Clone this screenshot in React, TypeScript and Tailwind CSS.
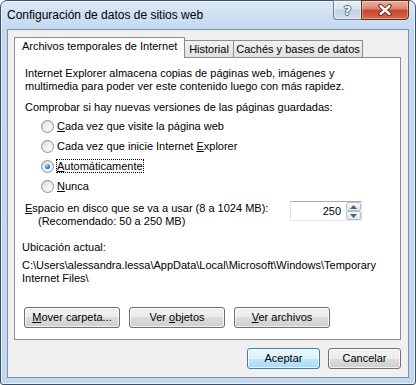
import type { ReactNode } from "react";

const BODY = "font-['Liberation_Sans',Arial,sans-serif] text-[11px] leading-[13px] text-black";

function Radio({ checked = false }: { checked?: boolean }) {
  return (
    <span className="relative flex h-[13px] w-[13px] shrink-0 items-center justify-center rounded-full border border-[#8e8f8f] bg-[linear-gradient(135deg,#cfd1d3,#fbfbfb)]">
      <span className="h-[9px] w-[9px] rounded-full bg-[linear-gradient(135deg,#e1e2e3,#ffffff)]" />
      {checked && (
        <span className="absolute h-[5px] w-[5px] rounded-full bg-[radial-gradient(circle_at_35%_30%,#9be4ff,#2b7ed6_55%,#0b3f80)]" />
      )}
    </span>
  );
}

function Button({
  children,
  width,
  primary = false,
}: {
  children: ReactNode;
  width: string;
  primary?: boolean;
}) {
  return (
    <div
      className={`flex h-[21px] items-center justify-center rounded-[3px] border shadow-[inset_0_0_0_1px_rgba(255,255,255,0.7)] ${width} ${
        primary
          ? "border-[#3c7fb1] bg-[linear-gradient(#ecf7fd_0%,#dcf1fc_50%,#c1e6fc_50%,#a9daf6_100%)]"
          : "border-[#707070] bg-[linear-gradient(#f2f2f2_0%,#ebebeb_50%,#dddddd_50%,#cfcfcf_100%)]"
      }`}
    >
      {children}
    </div>
  );
}

function SpinButton({ up = false }: { up?: boolean }) {
  return (
    <div className="flex h-[9px] w-[15px] items-center justify-center rounded-[2px] border border-[#b5c0cc] bg-[linear-gradient(#f7f8fa,#dfe5ec)]">
      <svg width="7" height="4" viewBox="0 0 7 4">
        <path d={up ? "M0 4 L3.5 0 L7 4 Z" : "M0 0 L3.5 4 L7 0 Z"} fill="#4b5f80" />
      </svg>
    </div>
  );
}

const RADIOS: { label: ReactNode; checked?: boolean }[] = [
  { label: <><span className="underline underline-offset-[1px]">C</span>ada vez que visite la página web</> },
  { label: <>Cada vez que inicie Internet <span className="underline underline-offset-[1px]">E</span>xplorer</> },
  {
    label: (
      <span className="outline-1 outline-dotted outline-black">
        <span className="underline underline-offset-[1px]">A</span>utomáticamente
      </span>
    ),
    checked: true,
  },
  { label: <><span className="underline underline-offset-[1px]">N</span>unca</> },
];

export default function App() {
  return (
    <div className="h-[385px] w-[416px] overflow-hidden bg-white">
      <div className="flex h-[385px] w-[416px] flex-col rounded-t-[7px] rounded-b-[3px] border border-[#3e5068] bg-[linear-gradient(180deg,#dbe8f6_0px,#c4d9f1_28px,#c2d8f1_100%)] px-[6px] pb-[6px] shadow-[inset_0_0_0_1px_#e6f0fb]">
        {/* Title bar */}
        <div className="flex h-[28px] items-start justify-between">
          <div className="pt-[7px] font-['Liberation_Sans',Arial,sans-serif] text-[12px] leading-[14px] text-black">
            Configuración de datos de sitios web
          </div>
          <div className="-mt-px flex">
            <div className="flex h-[20px] w-[28px] items-center justify-center rounded-bl-[4px] border border-r-0 border-[#6f7f93] bg-[linear-gradient(#e9f0f8_0%,#d6e2ef_45%,#bfd0e3_50%,#d2e0f0_100%)] shadow-[inset_0_0_0_1px_rgba(255,255,255,0.5)]">
              <span className="font-['DejaVu_Sans',sans-serif] text-[13px] font-bold leading-none text-white [text-shadow:1px_0_#56667a,-1px_0_#56667a,0_1px_#56667a,0_-1px_#56667a]">
                ?
              </span>
            </div>
            <div className="flex h-[20px] w-[48px] items-center justify-center rounded-br-[4px] border border-[#5a2a24] bg-[linear-gradient(#eab0a2_0%,#de826c_45%,#c7442a_50%,#d66a48_100%)] shadow-[inset_0_0_0_1px_rgba(255,255,255,0.35)]">
              <svg width="14" height="12" viewBox="0 0 14 12">
                <path d="M2.5 2 L11.5 10 M11.5 2 L2.5 10" stroke="#4a1d16" strokeWidth="4.2" strokeLinecap="round" />
                <path d="M2.5 2 L11.5 10 M11.5 2 L2.5 10" stroke="#ffffff" strokeWidth="2.4" strokeLinecap="round" />
              </svg>
            </div>
          </div>
        </div>

        {/* Client area */}
        <div className={`flex flex-1 flex-col border border-[#7d90a6] bg-[#f0f0f0] pl-[6px] pr-[7px] pt-[7px] ${BODY}`}>
          {/* Tabs */}
          <div className="relative z-10 flex h-[20px] items-end">
            <div className="relative z-10 -mb-px h-[21px] w-[171px] border border-b-0 border-[#898c95] bg-white pl-[7px] pt-[2px] whitespace-nowrap">
              Archivos temporales de Internet
            </div>
            <div className="-ml-px flex h-[17px] w-[50px] items-center justify-center border border-b-0 border-[#898c95] bg-[linear-gradient(#f2f2f2,#e0e0e0)] whitespace-nowrap">
              Historial
            </div>
            <div className="-ml-px flex h-[17px] w-[130px] items-center justify-center border border-b-0 border-[#898c95] bg-[linear-gradient(#f2f2f2,#e0e0e0)] whitespace-nowrap">
              Cachés y bases de datos
            </div>
          </div>

          {/* Tab panel */}
          <div className="flex h-[283px] flex-col border border-[#898c95] bg-white pl-[10px] pt-[9px] whitespace-nowrap">
            <div>Internet Explorer almacena copias de páginas web, imágenes y</div>
            <div>multimedia para poder ver este contenido luego con más rapidez.</div>

            <div className="mt-[8px]">Comprobar si hay nuevas versiones de las páginas guardadas:</div>
            <div className="mt-[2px] flex flex-col pl-[16px]">
              {RADIOS.map((r, i) => (
                <div key={i} className="flex h-[20px] items-center gap-[3px]">
                  <Radio checked={r.checked} />
                  <span>{r.label}</span>
                </div>
              ))}
            </div>

            <div className="mt-[6px] flex items-start">
              <div>
                <div>
                  <span className="underline underline-offset-[1px]">E</span>spacio en disco que se va a usar (8 a 1024 MB):
                </div>
                <div className="pl-[13px]">(Recomendado: 50 a 250 MB)</div>
              </div>
              <div className="-mt-px ml-auto mr-[38px] flex h-[20px] w-[72px] items-center border border-[#abadb3] border-b-[#e3e9ef] border-l-[#e2e3ea] border-r-[#dbdfe6] bg-white">
                <span className="flex-1 pr-[5px] text-right">250</span>
                <div className="flex flex-col">
                  <SpinButton up />
                  <SpinButton />
                </div>
              </div>
            </div>

            <div className="-ml-[3px] mt-[13px]">Ubicación actual:</div>
            <div className="-ml-[3px] mt-[5px]">
              <div>C:\Users\alessandra.lessa\AppData\Local\Microsoft\Windows\Temporary</div>
              <div>Internet Files\</div>
            </div>

            <div className="-ml-px mt-[22px] flex gap-[9px]">
              <Button width="w-[96px]">
                <span>
                  <span className="underline underline-offset-[1px]">M</span>over carpeta...
                </span>
              </Button>
              <Button width="w-[96px]">
                <span>
                  Ver <span className="underline underline-offset-[1px]">o</span>bjetos
                </span>
              </Button>
              <Button width="w-[96px]">
                <span>
                  <span className="underline underline-offset-[1px]">V</span>er archivos
                </span>
              </Button>
            </div>
          </div>

          {/* Dialog buttons */}
          <div className="mt-[8px] flex justify-end gap-[8px]">
            <Button width="w-[73px]" primary>
              Aceptar
            </Button>
            <Button width="w-[73px]">Cancelar</Button>
          </div>
        </div>
      </div>
    </div>
  );
}
